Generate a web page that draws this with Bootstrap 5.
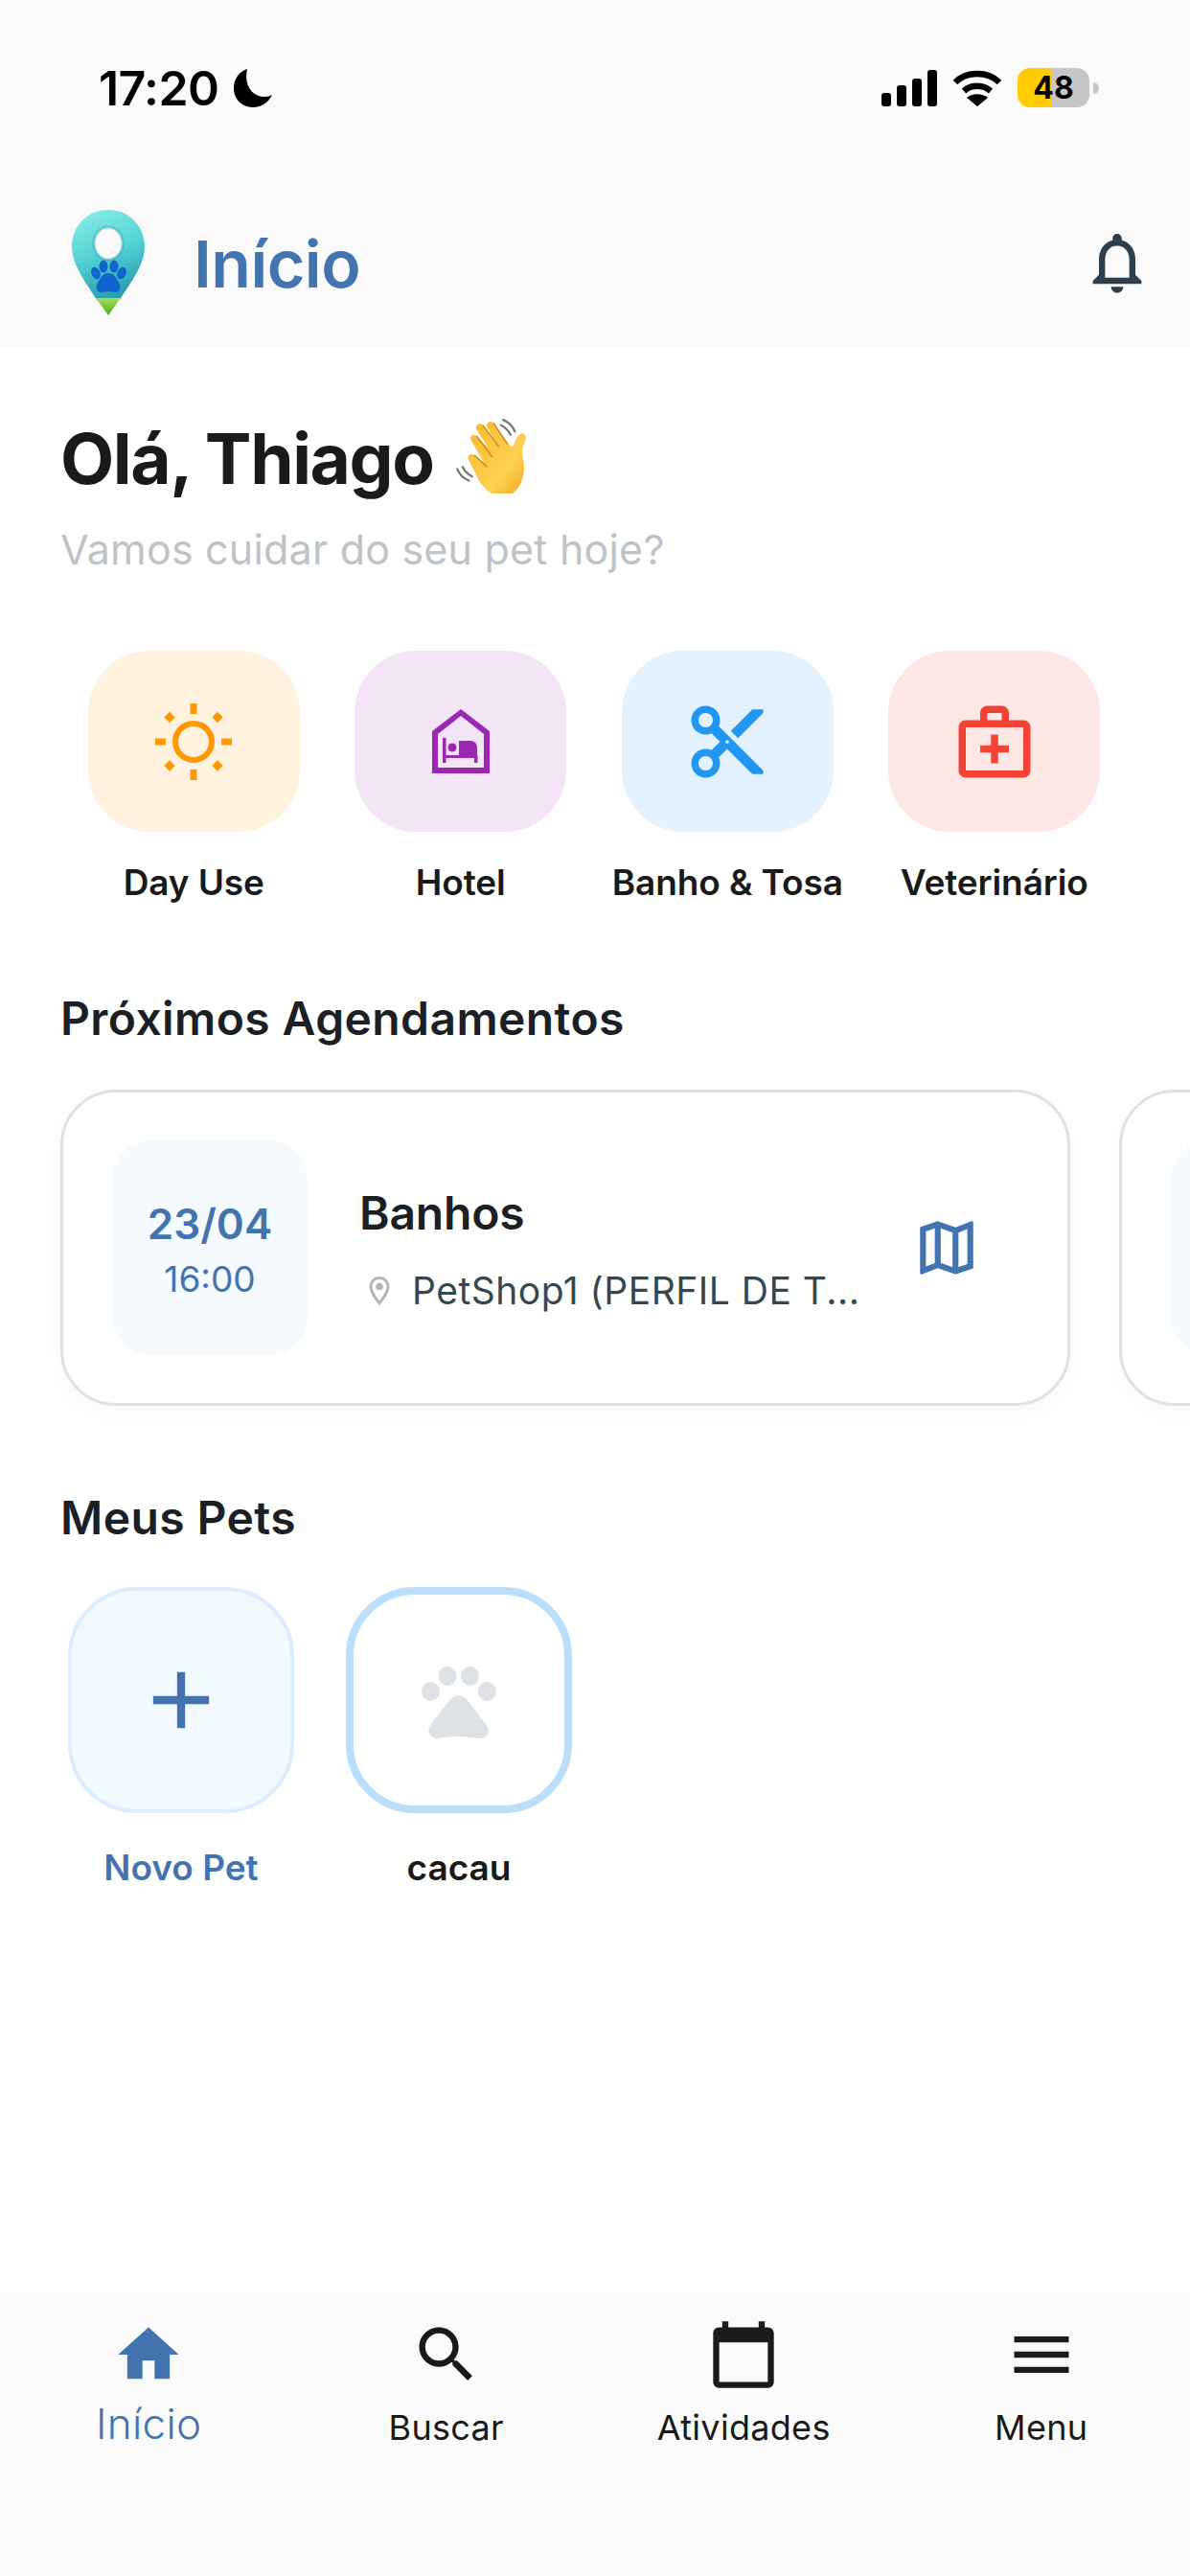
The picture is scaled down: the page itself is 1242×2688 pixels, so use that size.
<!DOCTYPE html>
<html lang="pt-BR">
<head>
    <meta charset="UTF-8">
    <title>Início</title>
    <link href="https://cdn.jsdelivr.net/npm/bootstrap@5.3.0/dist/css/bootstrap.min.css" rel="stylesheet">
    <style>
        html, body { height: 2688px; }
        body { width: 1242px; font-family: "Inter", "Liberation Sans", sans-serif; color: #1a1a1a; background: #fff; overflow: hidden; }
        svg { display: block; flex-shrink: 0; }

        .top-head { height: 362px; background: #fafafa; }
        .status-row { height: 219px; padding: 71px 95px 0 103px; }
        .clock { font-size: 50px; font-weight: 600; line-height: 42px; color: #000; letter-spacing: -.6px; }
        .moon-gap { margin-left: 15px; }
        .batt { width: 75px; height: 41px; border-radius: 13px; background: linear-gradient(90deg, #ffcc00 48%, #c6c6c6 48%); font-size: 32px; font-weight: 700; line-height: 41px; text-align: center; color: #000; }
        .batt-nub { width: 6px; height: 12px; background: #c6c6c6; border-radius: 0 6px 6px 0; }
        .title-row { padding: 0 38px 0 72px; }
        .page-title { font-size: 68px; font-weight: 600; color: #4474b0; line-height: 1; margin: 2px 0 0 48px; letter-spacing: -.5px; }

        .page-main { flex: 1; min-height: 0; padding: 72px 0 0 63px; overflow: hidden; }
        .hello { font-size: 73px; font-weight: 700; line-height: 90px; margin: 0; letter-spacing: -1.4px; }
        .hand-gap { margin-left: 22px; margin-top: -6px; }
        .hello-sub { font-size: 43px; color: #bdc3c6; line-height: 50px; margin: 24px 0 0; letter-spacing: .2px; }

        .svc-row { width: 1114px; margin-top: 81px; }
        .svc-item { width: 278.5px; }
        .svc-tile { width: 221px; height: 189px; border-radius: 64px; }
        .svc-name { font-size: 37px; font-weight: 600; line-height: 44px; margin-top: 31px; white-space: nowrap; letter-spacing: -.1px; }
        .tile-sun { background: #fff3e0; }
        .tile-hotel { background: #f3e5f5; }
        .tile-cut { background: #e3f2fd; }
        .tile-vet { background: #fde8e6; }

        .block-title { font-size: 48px; font-weight: 600; line-height: 56px; margin: 0; color: #1c1f23; letter-spacing: .4px; }
        .appt-title { margin-top: 92px; }
        .appt-strip { margin-top: 46px; gap: 51px; width: 1300px; }
        .appt-card { width: 1054px; height: 330px; border: 3px solid #dee2e6; border-radius: 58px; background: #fff; box-shadow: 0 8px 24px rgba(0, 0, 0, .03); padding: 0 89px 0 51px; flex-shrink: 0; }
        .date-box { width: 204px; height: 224px; border-radius: 40px; background: #f5faff; color: #4474b0; padding-top: 5px; }
        .date-day { font-size: 44px; font-weight: 600; line-height: 50px; }
        .date-hour { font-size: 37px; line-height: 46px; margin-top: 10px; }
        .appt-body { margin-left: 54px; width: 530px; padding-top: 3px; }
        .appt-name { font-size: 48px; font-weight: 600; line-height: 56px; color: #1c1f23; letter-spacing: -.2px; }
        .appt-place { font-size: 39px; line-height: 46px; color: #37474f; margin-top: 30px; padding-left: 3px; gap: 16px; white-space: nowrap; letter-spacing: .5px; }
        .ghost-box { width: 204px; height: 224px; border-radius: 40px; background: #f5faff; }

        .pets-title { margin-top: 89px; }
        .pet-row { margin-top: 44px; padding-left: 8px; gap: 54px; }
        .pet-item { width: 236px; }
        .pet-tile { width: 236px; height: 236px; border-radius: 72px; }
        .pet-new { background: #f2f9ff; border: 4px solid #dcedff; }
        .pet-own { background: #fff; border: 8px solid #bbdefb; }
        .paw-shift { margin-top: 6px; }
        .pet-name { font-size: 37px; font-weight: 600; line-height: 44px; margin-top: 35px; }
        .txt-blue { color: #4474b0; }

        .tab-bar { height: 295px; background: #fafafa; padding-top: 26px; }
        .tab-item { width: 310.5px; height: 160px; }
        .tab-name { font-size: 36px; line-height: 44px; margin-top: 16px; letter-spacing: .3px; }
        .tab-on { font-size: 44px; color: #4474b0; margin-top: 12px; font-weight: 300; }
    </style>
</head>
<body class="d-flex flex-column">

<header class="top-head">
    <div class="status-row d-flex justify-content-between align-items-start">
        <div class="d-flex align-items-center">
            <span class="clock">17:20</span>
            <svg class="moon-gap" width="42" height="42" viewBox="0 0 42 42"><path fill="#000" d="M15 1C6 4 1 12 1 21c0 12 9 20 20 20 9 0 16-5 20-13-2 1-5 2-8 2C21 30 11 19 15 1z"/></svg>
        </div>
        <div class="d-flex align-items-center">
            <svg width="58" height="38" viewBox="0 0 58 38" fill="#000">
                <rect x="0" y="24" width="10" height="14" rx="3"/><rect x="16" y="16" width="10" height="22" rx="3"/>
                <rect x="32" y="9" width="10" height="29" rx="3"/><rect x="48" y="0" width="10" height="38" rx="3"/>
            </svg>
            <svg class="ms-3" width="52" height="38" viewBox="0 0 52 38" fill="none" stroke="#000" stroke-width="6.5">
                <path d="M3 13C15 1 37 1 49 13"/><path d="M12 22c8-7 20-7 28 0"/><path fill="#000" stroke="none" d="M15 29c6-5 16-5 22 0L26 38z"/>
            </svg>
            <div class="batt ms-3">48</div>
            <div class="batt-nub ms-1"></div>
        </div>
    </div>
    <div class="title-row d-flex align-items-center">
        <svg width="82" height="110" viewBox="0 0 82 110">
            <defs>
                <linearGradient id="pinGrad" x1="0" y1="0" x2="0.3" y2="1">
                    <stop offset="0" stop-color="#8ceee9"/><stop offset=".55" stop-color="#55d3d6"/><stop offset="1" stop-color="#2f9fb0"/>
                </linearGradient>
                <linearGradient id="tipGrad" x1="0" y1="0" x2="0" y2="1">
                    <stop offset="0" stop-color="#a6e05a"/><stop offset="1" stop-color="#4fa51c"/>
                </linearGradient>
            </defs>
            <path fill="url(#pinGrad)" d="M41 0C19 0 3 17 3 39c0 19 17 40 26 55h24c9-15 26-36 26-55C79 17 63 0 41 0z"/>
            <ellipse cx="41" cy="35" rx="15" ry="17" fill="#fafafa" stroke="#2fa5b0" stroke-opacity=".45" stroke-width="3"/>
            <path fill="url(#tipGrad)" d="M28 92h26l-13 18z"/>
            <g fill="#0e63cc">
                <ellipse cx="28" cy="66" rx="4.500" ry="6.500" transform="rotate(-25 28 66)"/><ellipse cx="36" cy="59" rx="4.500" ry="6.500"/>
                <ellipse cx="47" cy="59" rx="4.500" ry="6.500"/><ellipse cx="55" cy="66" rx="4.500" ry="6.500" transform="rotate(25 55 66)"/>
                <path d="M41 66c6 0 8 5 11 10 3 5 1 10-4 10-3 0-4-1-7-1s-4 1-7 1c-5 0-7-5-4-10 3-5 5-10 11-10z"/>
            </g>
        </svg>
        <h1 class="page-title flex-grow-1">Início</h1>
        <svg width="76" height="76" viewBox="0 0 24 24" fill="#2f3e4b"><path d="M12 22c1.100 0 2-.9 2-2h-4c0 1.100.9 2 2 2zm6-6v-5c0-3.070-1.630-5.640-4.500-6.320V4c0-.83-.67-1.500-1.500-1.500s-1.500.67-1.500 1.500v.68C7.640 5.360 6 7.920 6 11v5l-2 2v1h16v-1l-2-2zm-2 1H8v-6c0-2.480 1.510-4.500 4-4.500s4 2.020 4 4.500v6z"/></svg>
    </div>
</header>

<main class="page-main">
    <div class="d-flex align-items-center">
        <h2 class="hello">Olá, Thiago</h2>
        <svg class="hand-gap" width="78" height="78" viewBox="0 0 68 70">
            <defs>
                <linearGradient id="handGrad" x1="0" y1="0" x2="1" y2="1">
                    <stop offset="0" stop-color="#f8b62c"/><stop offset=".65" stop-color="#fdd251"/><stop offset="1" stop-color="#f0a51f"/>
                </linearGradient>
            </defs>
            <g fill="none" stroke="#777" stroke-width="2" stroke-linecap="round">
                <path d="M44 1c5 2 9 6 11 11"/><path d="M42 6c4 2 7 5 9 9"/>
                <path d="M1 47c2 5 6 9 11 11"/><path d="M6 45c2 4 5 7 9 9"/>
            </g>
            <path fill="url(#handGrad)" d="M14 20c-2-3 2-7 5-4l12 12-12-18c-2-4 3-7 6-4l13 17L29 8c-2-4 3-7 6-4l14 19c2 3 4 4 5 1 2-5 5-12 9-10 5 2 0 9-1 15-1 7 4 15 0 27-3 11-12 18-20 17-8-1-13-5-20-14L12 39c-3-3 1-8 5-5l9 7z"/>
            <path fill="none" stroke="#c98512" stroke-width="1.200" d="M19 16l15 20M25 6l15 20M35 4l13 20M17 34l12 11"/>
        </svg>
    </div>
    <p class="hello-sub">Vamos cuidar do seu pet hoje?</p>

    <div class="svc-row d-flex">
        <div class="svc-item d-flex flex-column align-items-center">
            <div class="svc-tile tile-sun d-flex align-items-center justify-content-center">
                <svg width="84" height="84" viewBox="0 0 84 84" fill="#ff9800">
                    <circle cx="42" cy="42" r="19" fill="none" stroke="#ff9800" stroke-width="6"/>
                    <rect x="38.500" y="2" width="7" height="11"/><rect x="38.500" y="71" width="7" height="11"/>
                    <rect x="2" y="38.500" width="11" height="7"/><rect x="71" y="38.500" width="11" height="7"/>
                    <rect x="13" y="12.500" width="8" height="8" transform="rotate(45 17 16.500)"/><rect x="63" y="12.500" width="8" height="8" transform="rotate(45 67 16.500)"/>
                    <rect x="13" y="63" width="8" height="8" transform="rotate(45 17 67)"/><rect x="63" y="63" width="8" height="8" transform="rotate(45 67 67)"/>
                </svg>
            </div>
            <div class="svc-name">Day Use</div>
        </div>
        <div class="svc-item d-flex flex-column align-items-center">
            <div class="svc-tile tile-hotel d-flex align-items-center justify-content-center">
                <svg width="60" height="67" viewBox="0 0 60 67" fill="#9c27b0">
                    <path d="M30 0L60 23v44H0V23zM30 7L6 26v35h48V26z" fill-rule="evenodd"/>
                    <rect x="11" y="30" width="3.500" height="26"/><rect x="14" y="48" width="33" height="3"/><rect x="44" y="48" width="3.500" height="8"/>
                    <circle cx="21" cy="40" r="4.500"/>
                    <path d="M28 33h12c4 0 7 3 7 7v8H28z"/>
                </svg>
            </div>
            <div class="svc-name">Hotel</div>
        </div>
        <div class="svc-item d-flex flex-column align-items-center">
            <div class="svc-tile tile-cut d-flex align-items-center justify-content-center">
                <svg width="90" height="90" viewBox="0 0 24 24" fill="#2196f3"><path d="M9.640 7.640c.23-.5.36-1.050.36-1.640 0-2.210-1.790-4-4-4S2 3.790 2 6s1.790 4 4 4c.59 0 1.140-.13 1.640-.36L10 12l-2.360 2.360C7.140 14.130 6.590 14 6 14c-2.210 0-4 1.790-4 4s1.790 4 4 4 4-1.790 4-4c0-.59-.13-1.140-.36-1.640L12 14l7 7h3v-1L9.640 7.640zM6 8c-1.100 0-2-.89-2-2s.9-2 2-2 2 .89 2 2-.9 2-2 2zm0 12c-1.100 0-2-.89-2-2s.9-2 2-2 2 .89 2 2-.9 2-2 2zm6-7.500c-.28 0-.5-.22-.5-.5s.22-.5.5-.5.5.22.5.5-.22.5-.5.5zM19 3l-6 6 2 2 7-7V3z"/></svg>
            </div>
            <div class="svc-name">Banho &amp; Tosa</div>
        </div>
        <div class="svc-item d-flex flex-column align-items-center">
            <div class="svc-tile tile-vet d-flex align-items-center justify-content-center">
                <svg width="90" height="90" viewBox="0 0 24 24" fill="#f44336"><path d="M20 6h-4V4c0-1.100-.9-2-2-2h-4c-1.100 0-2 .9-2 2v2H4c-1.100 0-2 .9-2 2v12c0 1.100.9 2 2 2h16c1.100 0 2-.9 2-2V8c0-1.100-.9-2-2-2zM10 4h4v2h-4V4zm10 16H4V8h16v12z"/><path d="M13 10h-2v3H8v2h3v3h2v-3h3v-2h-3z"/></svg>
            </div>
            <div class="svc-name">Veterinário</div>
        </div>
    </div>

    <h3 class="block-title appt-title">Próximos Agendamentos</h3>
    <div class="appt-strip d-flex">
        <div class="appt-card d-flex align-items-center">
            <div class="date-box d-flex flex-column align-items-center justify-content-center">
                <div class="date-day">23/04</div>
                <div class="date-hour">16:00</div>
            </div>
            <div class="appt-body">
                <div class="appt-name">Banhos</div>
                <div class="appt-place d-flex align-items-center">
                    <svg width="36" height="36" viewBox="0 0 24 24" fill="#b5b5b5"><path d="M12 2C8.130 2 5 5.130 5 9c0 5.250 7 13 7 13s7-7.750 7-13c0-3.870-3.130-7-7-7zM7 9c0-2.760 2.240-5 5-5s5 2.240 5 5c0 2.880-2.880 7.190-5 9.880C9.920 16.210 7 11.850 7 9z"/><circle cx="12" cy="9" r="2.500"/></svg>
                    <span>PetShop1 (PERFIL DE T...</span>
                </div>
            </div>
            <svg class="ms-auto" width="74" height="74" viewBox="0 0 24 24" fill="#4474b0"><path d="M20.500 3l-.16.03L15 5.100 9 3 3.360 4.900c-.21.07-.36.25-.36.48V20.500c0 .28.22.5.5.5l.16-.03L9 18.900l6 2.100 5.640-1.900c.21-.07.36-.25.36-.48V3.500c0-.28-.22-.5-.5-.5zM10 5.470l4 1.400v11.660l-4-1.400V5.470zm-5 .99l3-1.010v11.700l-3 1.160V6.460zm14 11.080l-3 1.010V6.860l3-1.160v11.840z"/></svg>
        </div>
        <div class="appt-card d-flex align-items-center">
            <div class="ghost-box"></div>
        </div>
    </div>

    <h3 class="block-title pets-title">Meus Pets</h3>
    <div class="pet-row d-flex">
        <div class="pet-item d-flex flex-column align-items-center">
            <div class="pet-tile pet-new d-flex align-items-center justify-content-center">
                <svg width="100" height="100" viewBox="0 0 24 24" fill="#4474b0"><path d="M19 13h-6v6h-2v-6H5v-2h6V5h2v6h6v2z"/></svg>
            </div>
            <div class="pet-name txt-blue">Novo Pet</div>
        </div>
        <div class="pet-item d-flex flex-column align-items-center">
            <div class="pet-tile pet-own d-flex align-items-center justify-content-center">
                <svg class="paw-shift" width="80" height="78" viewBox="0 0 80 78" fill="#dee2e6">
                    <ellipse cx="10.500" cy="27" rx="9.500" ry="10"/><ellipse cx="28" cy="11" rx="9.500" ry="10"/>
                    <ellipse cx="51.500" cy="11" rx="9.500" ry="10"/><ellipse cx="69.500" cy="27" rx="9.500" ry="10"/>
                    <path d="M39.500 31c4 0 7 2 10 6l17 22c3 4 5 7 4 10-1 5-5 7-9 7-6-1-14-2-22-2s-16 1-22 2c-4 0-8-2-9-7-1-3 1-6 4-10l17-22c3-4 6-6 10-6z"/>
                </svg>
            </div>
            <div class="pet-name">cacau</div>
        </div>
    </div>
</main>

<nav class="tab-bar d-flex">
    <div class="tab-item d-flex flex-column align-items-center">
        <svg width="76" height="76" viewBox="0 0 24 24" fill="#4474b0"><path d="M10 20v-6h4v6h5v-8h3L12 3 2 12h3v8z"/></svg>
        <span class="tab-name tab-on">Início</span>
    </div>
    <div class="tab-item d-flex flex-column align-items-center">
        <svg width="76" height="76" viewBox="0 0 24 24" fill="#1a1a1a"><path d="M15.500 14h-.79l-.28-.27C15.410 12.590 16 11.110 16 9.500 16 5.910 13.090 3 9.500 3S3 5.910 3 9.500 5.910 16 9.500 16c1.610 0 3.090-.59 4.230-1.570l.27.28v.79l5 4.990L20.490 19l-4.990-5zm-6 0C7.010 14 5 11.990 5 9.500S7.010 5 9.500 5 14 7.010 14 9.500 11.990 14 9.500 14z"/></svg>
        <span class="tab-name">Buscar</span>
    </div>
    <div class="tab-item d-flex flex-column align-items-center">
        <svg width="76" height="76" viewBox="0 0 24 24" fill="#1a1a1a"><path d="M20 3h-1V1h-2v2H7V1H5v2H4c-1.100 0-2 .9-2 2v16c0 1.100.9 2 2 2h16c1.100 0 2-.9 2-2V5c0-1.100-.9-2-2-2zm0 18H4V8h16v13z"/></svg>
        <span class="tab-name">Atividades</span>
    </div>
    <div class="tab-item d-flex flex-column align-items-center">
        <svg width="76" height="76" viewBox="0 0 24 24" fill="#1a1a1a"><path d="M3 18h18v-2H3v2zm0-5h18v-2H3v2zm0-7v2h18V6H3z"/></svg>
        <span class="tab-name">Menu</span>
    </div>
</nav>

</body>
</html>
